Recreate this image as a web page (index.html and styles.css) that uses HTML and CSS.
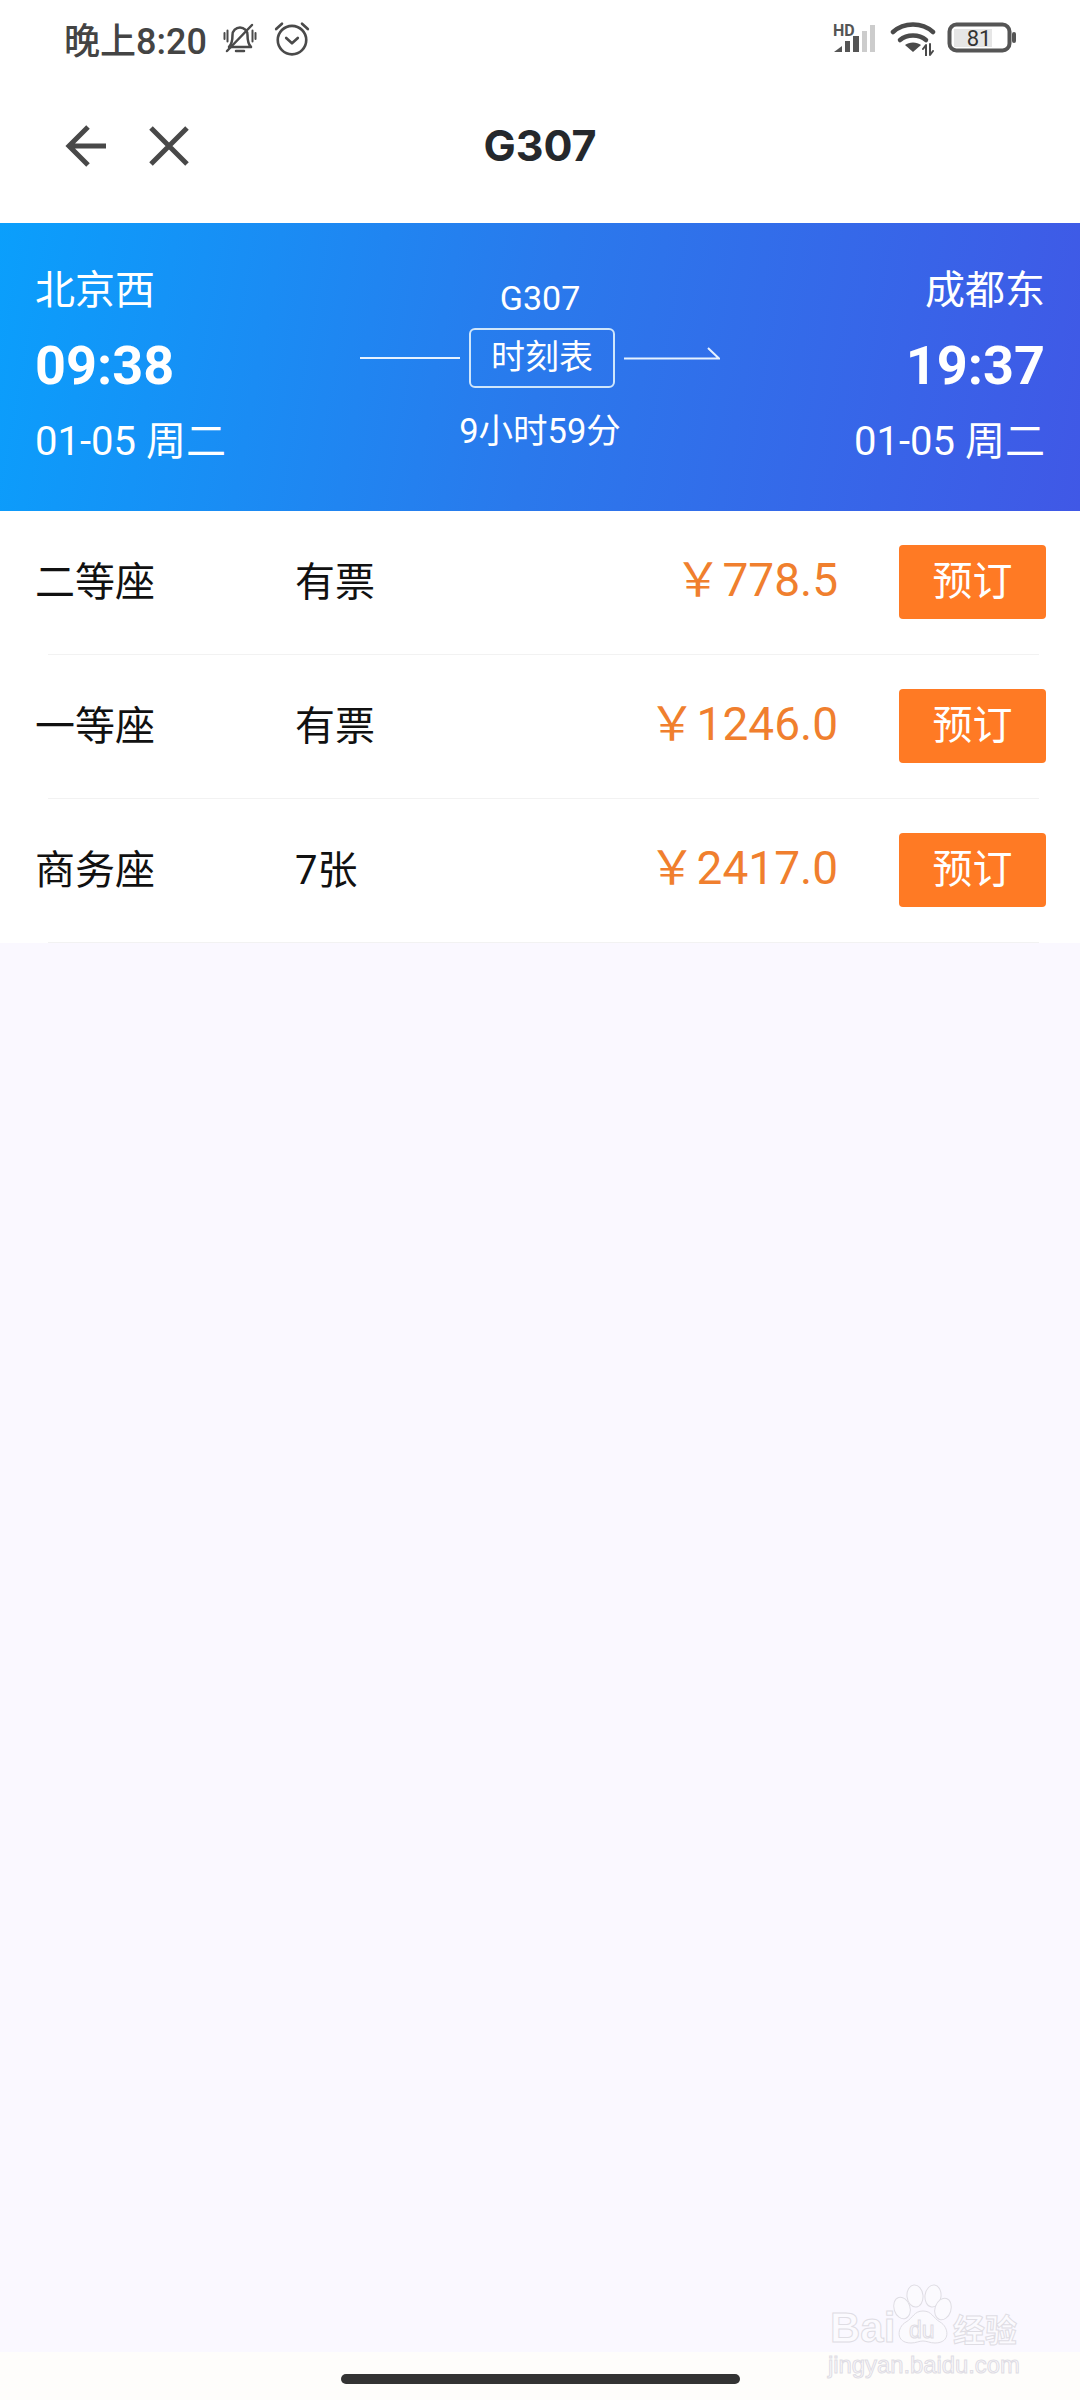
FILE: index.html
```html
<!DOCTYPE html>
<html lang="zh-CN">
<head>
    <meta charset="UTF-8">
    <meta name="viewport" content="width=device-width, initial-scale=1.0">
    <title>G307</title>
    <link rel="stylesheet" href="styles.css">
</head>
<body>

<div class="page">
    <!-- Statusleiste -->
    <div class="status-bar">
        <div class="status-left">
            <span class="status-time">晚上8:20</span>
            <svg class="icon-bell" width="36" height="36" viewBox="0 0 36 36">
                <path class="line" d="M7 27c3-3 3.500-7 3.500-12a7.500 7.500 0 0 1 15 0c0 5 .5 9 3.500 12z"/>
                <path class="line" d="M5 31L30 5"/>
                <path class="line" d="M14 31h8"/>
                <path class="line-thin" d="M2.500 13v6M5.500 10.500v11M30.500 10.500v11M33.500 13v6"/>
            </svg>
            <svg class="icon-alarm" width="38" height="38" viewBox="0 0 36 36">
                <circle class="line" cx="18" cy="20" r="13.500"/>
                <path class="line" d="M12.500 18l5.500 5 5.500-5"/>
                <path class="line" d="M3 9.500l5.500-5M33 9.500l-5.500-5"/>
            </svg>
        </div>
        <div class="status-right">
            <svg width="44" height="34" viewBox="0 0 44 34">
                <text class="hd-text" x="0" y="15">HD</text>
                <path class="bar-on" d="M1 31l8-6v6z"/>
                <rect class="bar-on" x="12" y="20" width="5" height="11"/>
                <rect class="bar-on" x="20" y="15" width="6" height="16"/>
                <rect class="bar-off" x="29" y="10" width="5" height="21"/>
                <rect class="bar-off" x="37" y="4" width="5" height="27"/>
            </svg>
            <svg class="icon-wifi" width="46" height="36" viewBox="0 0 46 36">
                <path class="wifi-arc" d="M3 12c11-10 29-10 40 0"/>
                <path class="wifi-arc" d="M10 20c7-6 19-6 26 0"/>
                <path class="wifi-dot" d="M15 25c4-3.500 12-3.500 16 0l-8 7z"/>
                <path class="line-thin" d="M36 36v-11l-3 4M40 24v11l3-4"/>
            </svg>
            <svg class="icon-battery" width="70" height="32" viewBox="0 0 70 32">
                <rect class="battery-fill" x="7" y="7" width="38" height="18"/>
                <rect class="battery-frame" x="2.500" y="2.500" width="60" height="26" rx="7"/>
                <rect class="battery-nub" x="65" y="10" width="4" height="11" rx="2"/>
                <text class="battery-text" x="32" y="24">81</text>
            </svg>
        </div>
    </div>

    <!-- Navigation -->
    <div class="nav-bar">
        <div class="nav-icons">
            <svg width="44" height="44" viewBox="0 0 44 44">
                <path class="nav-stroke" d="M42 22H6M24 3L5 22l19 19"/>
            </svg>
            <svg width="44" height="44" viewBox="0 0 44 44">
                <path class="nav-stroke" d="M4 4l36 36M40 4L4 40"/>
            </svg>
        </div>
        <h1 class="nav-title">G307</h1>
    </div>

    <!-- Zuginfo -->
    <div class="train-banner">
        <div class="station">
            <div class="station-name">北京西</div>
            <div class="station-time">09:38</div>
            <div class="station-date">01-05 周二</div>
        </div>
        <div class="train-center">
            <div class="train-no">G307</div>
            <div class="schedule-row">
                <span class="schedule-line"></span>
                <a class="schedule-btn">时刻表</a>
                <svg class="schedule-arrow" width="96" height="16" viewBox="0 0 96 16">
                    <path class="arrow-line" d="M0 13.500h95L84 3"/>
                </svg>
            </div>
            <div class="train-duration">9小时59分</div>
        </div>
        <div class="station station-right">
            <div class="station-name">成都东</div>
            <div class="station-time">19:37</div>
            <div class="station-date">01-05 周二</div>
        </div>
    </div>

    <!-- Sitzplaetze -->
    <div class="seat-list">
        <div class="seat-row">
            <div class="seat-name">二等座</div>
            <div class="seat-left">有票</div>
            <div class="seat-price"><span class="yen">￥</span>778.5</div>
            <div class="book-btn">预订</div>
        </div>
        <div class="seat-divider"></div>
        <div class="seat-row">
            <div class="seat-name">一等座</div>
            <div class="seat-left">有票</div>
            <div class="seat-price"><span class="yen">￥</span>1246.0</div>
            <div class="book-btn">预订</div>
        </div>
        <div class="seat-divider"></div>
        <div class="seat-row">
            <div class="seat-name">商务座</div>
            <div class="seat-left">7张</div>
            <div class="seat-price"><span class="yen">￥</span>2417.0</div>
            <div class="book-btn">预订</div>
        </div>
        <div class="seat-divider"></div>
    </div>

    <div class="page-fill"></div>

    <div class="home-area">
        <div class="home-bar"></div>
    </div>

    <!-- Wasserzeichen -->
    <svg class="watermark" width="200" height="100" viewBox="0 0 200 100">
        <text class="wm-bai" x="0" y="57">Bai</text>
        <ellipse class="wm-shape" cx="85" cy="11" rx="8" ry="11" transform="rotate(-6 85 11)"/>
        <ellipse class="wm-shape" cx="103" cy="11" rx="8" ry="11" transform="rotate(8 103 11)"/>
        <ellipse class="wm-shape" cx="72" cy="23" rx="8" ry="11" transform="rotate(-18 72 23)"/>
        <ellipse class="wm-shape" cx="113" cy="24" rx="8" ry="11" transform="rotate(18 113 24)"/>
        <path class="wm-shape" d="M93 26c-9 0-10 7-17 11-9 5-11 21 5 21 5 0 8-2 12-2s7 2 12 2c16 0 14-16 5-21-7-4-8-11-17-11z"/>
        <text class="wm-du" x="79" y="53">du</text>
        <text class="wm-cn" x="123" y="57">经验</text>
        <text class="wm-url" x="-2" y="88">jingyan.baidu.com</text>
    </svg>
</div>

</body>
</html>
```

FILE: styles.css
```css
body {
    margin: 0;
    font-family: Roboto, "Noto Sans CJK SC", sans-serif;
    background-color: #faf8ff;
}
.page {
    position: relative;
    display: flex;
    flex-direction: column;
    width: 1080px;
    height: 2400px;
    overflow: hidden;
}

/* status bar */
.status-bar {
    display: flex;
    justify-content: space-between;
    align-items: center;
    height: 76px;
    padding: 0 64px;
    box-sizing: border-box;
    background-color: #fff;
}
.status-left, .status-right {
    display: flex;
    align-items: center;
}
.status-time {
    font-size: 36px;
    font-weight: 500;
    color: #444;
}
.icon-bell {
    margin-left: 15px;
}
.icon-alarm {
    margin-left: 15px;
}
.status-right {
    margin-right: -1px;
}
.icon-wifi {
    margin-left: 13px;
}
.icon-battery {
    margin-left: 11px;
}
.line, .line-thin {
    fill: none;
    stroke: #4a4a4a;
    stroke-width: 2.5;
    stroke-linecap: round;
    stroke-linejoin: round;
}
.line-thin {
    stroke-width: 2;
}
.hd-text {
    font-size: 16px;
    font-weight: 700;
    fill: #555;
}
.bar-on {
    fill: #555;
}
.bar-off {
    fill: #ccc;
}
.wifi-arc {
    fill: none;
    stroke: #4a4a4a;
    stroke-width: 4.500;
    stroke-linecap: round;
}
.wifi-dot {
    fill: #4a4a4a;
}
.battery-fill {
    fill: #e6e6e6;
}
.battery-frame {
    fill: none;
    stroke: #555;
    stroke-width: 4;
}
.battery-nub {
    fill: #555;
}
.battery-text {
    font-size: 22px;
    fill: #333;
    text-anchor: middle;
}

/* nav */
.nav-bar {
    position: relative;
    display: flex;
    justify-content: center;
    align-items: center;
    height: 138px;
    padding-bottom: 9px;
    background-color: #fff;
}
.nav-icons {
    position: absolute;
    left: 64px;
    top: 48px;
    display: flex;
    gap: 39px;
    height: 44px;
}
.nav-stroke {
    fill: none;
    stroke: #484848;
    stroke-width: 5;
}
.nav-title {
    margin: 0;
    font-family: Inter, Roboto, sans-serif;
    font-size: 43px;
    font-weight: 700;
    color: #25282c;
}

/* banner */
.train-banner {
    display: grid;
    grid-template-columns: 1fr auto 1fr;
    height: 288px;
    padding: 0 35px;
    box-sizing: border-box;
    background: linear-gradient(100deg, #0a9ffc 0%, #2a79ec 50%, #4058e6 100%);
    color: #fff;
}
.station {
    padding-top: 43px;
}
.station-right {
    text-align: right;
}
.station-name {
    font-size: 40px;
    line-height: 50px;
}
.station-time {
    margin-top: 15px;
    font-size: 54px;
    font-weight: 700;
    line-height: 70px;
}
.station-date {
    margin-top: 16px;
    font-size: 40px;
    line-height: 50px;
}
.train-center {
    display: flex;
    flex-direction: column;
    align-items: center;
    padding-top: 55px;
}
.train-no {
    font-size: 34px;
    line-height: 40px;
}
.schedule-row {
    display: flex;
    align-items: center;
    margin-top: 10px;
}
.schedule-line {
    width: 100px;
    height: 2px;
    background-color: #e6f2ff;
}
.schedule-btn {
    width: 146px;
    height: 60px;
    margin: 0 9px;
    box-sizing: border-box;
    border: 2px solid #cfe6fb;
    border-radius: 6px;
    font-size: 34px;
    line-height: 54px;
    text-align: center;
}
.schedule-arrow {
    margin-bottom: 11px;
}
.arrow-line {
    fill: none;
    stroke: #e6f2ff;
    stroke-width: 2;
}
.train-duration {
    margin-top: 23px;
    font-size: 34.500px;
    line-height: 40px;
}

/* seats */
.seat-list {
    background-color: #fff;
}
.seat-row {
    display: flex;
    align-items: center;
    height: 143px;
    padding: 0 34px 0 35px;
}
.seat-name {
    width: 260px;
    margin-bottom: 8px;
    font-size: 40px;
    color: #111;
}
.seat-left {
    flex: 1;
    margin-bottom: 8px;
    font-size: 40px;
    color: #111;
}
.seat-price {
    margin-bottom: 10px;
    font-size: 46px;
    line-height: 60px;
    color: #f07f2e;
}
.yen {
    margin-right: 1px;
    font-family: "Noto Sans CJK SC", sans-serif;
    font-size: 47px;
}
.book-btn {
    width: 147px;
    height: 74px;
    margin-left: 61px;
    margin-bottom: 2px;
    border-radius: 4px;
    background-color: #ff7a24;
    color: #fff;
    font-size: 40px;
    line-height: 74px;
    text-align: center;
}
.seat-divider {
    height: 1px;
    margin: 0 41px 0 48px;
    background-color: #f2f2f2;
}

.page-fill {
    flex: 1;
}

/* home indicator */
.home-area {
    display: flex;
    justify-content: center;
    align-items: flex-end;
    height: 48px;
    padding-bottom: 16px;
    box-sizing: border-box;
    background-color: #fefdfb;
}
.home-bar {
    width: 399px;
    height: 10px;
    border-radius: 5px;
    background-color: #333;
}

/* watermark */
.watermark {
    position: absolute;
    left: 830px;
    top: 2285px;
    overflow: visible;
}
.wm-shape, .wm-bai, .wm-du, .wm-cn, .wm-url {
    fill: #fbfafe;
    stroke: #dfdde4;
    stroke-width: 1;
}
.wm-bai, .wm-du {
    font-family: "Liberation Sans", sans-serif;
    font-weight: 700;
}
.wm-bai {
    font-size: 42px;
}
.wm-du {
    font-size: 23px;
    font-weight: 400;
}
.wm-cn {
    font-family: "Noto Sans CJK SC", sans-serif;
    font-size: 32px;
    font-weight: 700;
}
.wm-url {
    font-family: "Liberation Sans", sans-serif;
    font-size: 23.800px;
}
```
